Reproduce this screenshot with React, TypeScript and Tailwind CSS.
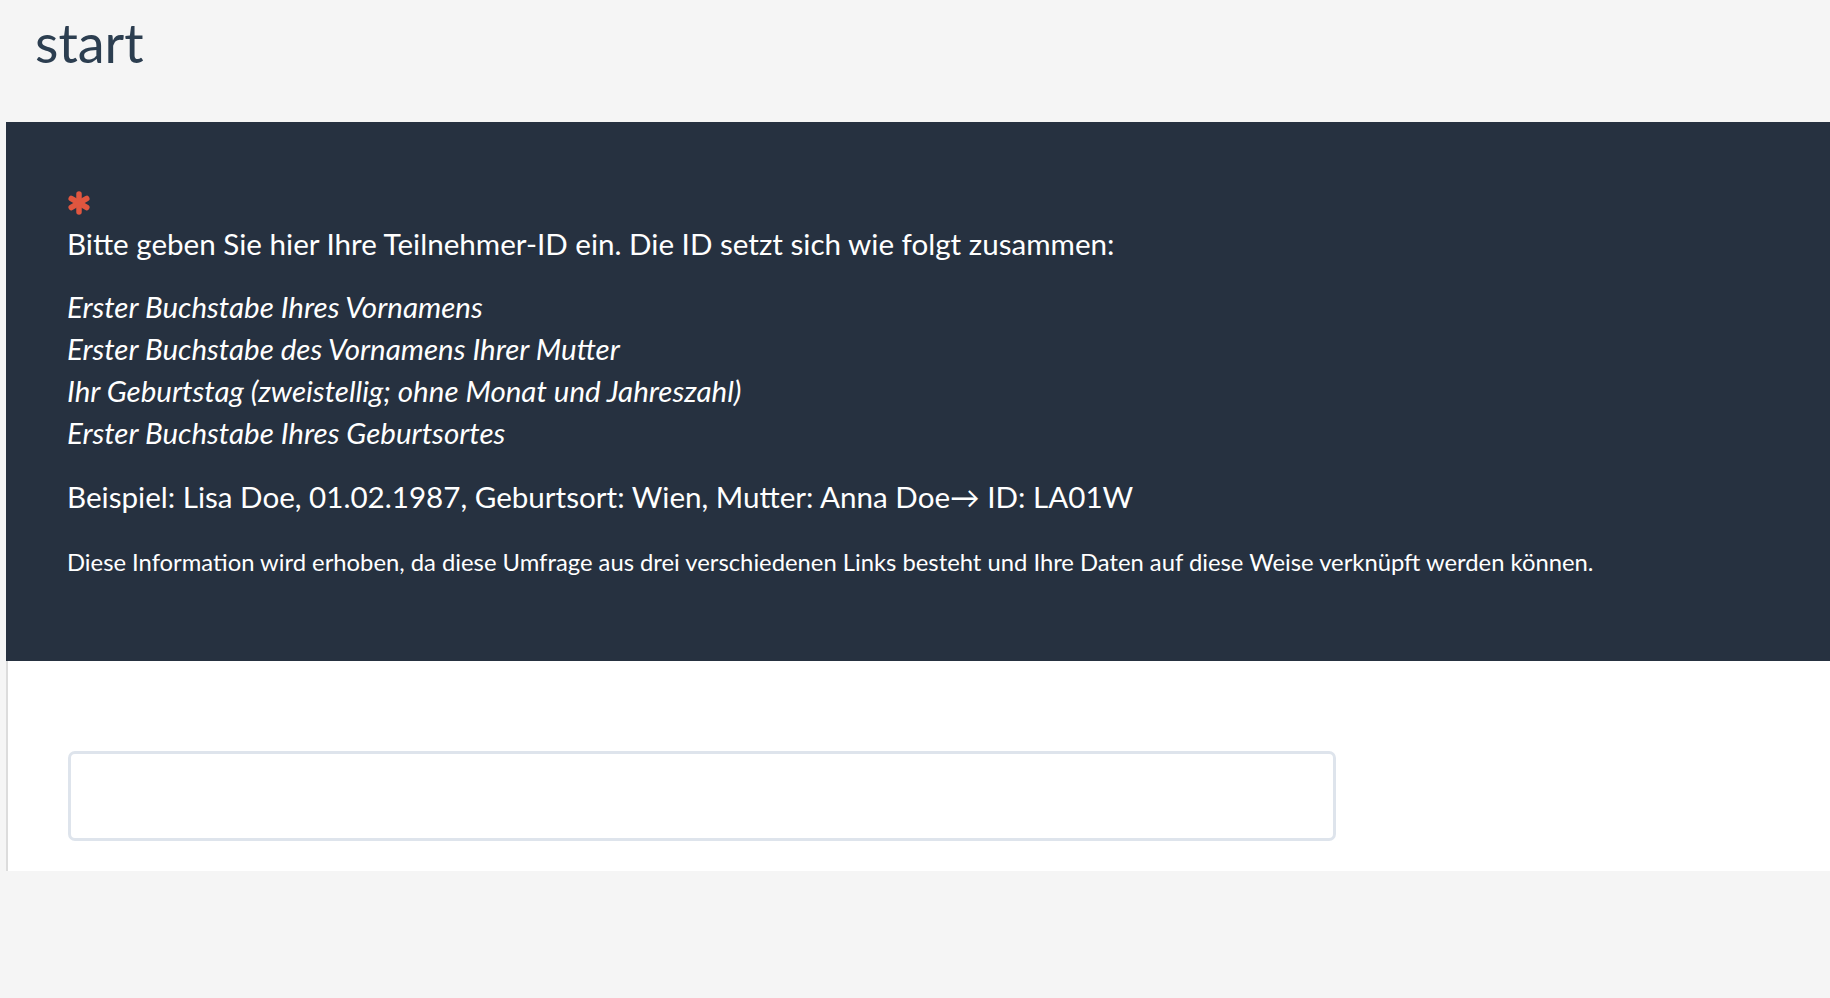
import { useState } from 'react';

function Asterisk() {
  return (
    <svg width="24" height="24" viewBox="0 0 24 24" className="block">
      <g stroke="#e0563f" strokeWidth="5.5" strokeLinecap="round">
        <line x1="12" y1="3" x2="12" y2="21" />
        <line x1="4.2" y1="7.5" x2="19.8" y2="16.5" />
        <line x1="4.2" y1="16.5" x2="19.8" y2="7.5" />
      </g>
    </svg>
  );
}

export default function App() {
  const [value, setValue] = useState('');

  return (
    <div className="min-h-screen bg-[#f5f5f5] font-['Lato',sans-serif]">
      <header className="h-[122px] pl-[35px] pt-[13px]">
        <h1 className="text-[54px] leading-[60px] text-[#2c3e50]">start</h1>
      </header>

      <section className="ml-[6px]">
        <div className="bg-[#263140] pl-[61px] pr-[40px] pt-[69px] pb-[84px] text-white">
          <Asterisk />
          <p className="mt-[11px] text-[29.6px] leading-[36px]">
            Bitte geben Sie hier Ihre Teilnehmer-ID ein. Die ID setzt sich wie folgt zusammen:
          </p>
          <div className="mt-[24px] text-[29.5px] italic leading-[42px]">
            <div>Erster Buchstabe Ihres Vornamens</div>
            <div>Erster Buchstabe des Vornamens Ihrer Mutter</div>
            <div>Ihr Geburtstag (zweistellig; ohne Monat und Jahreszahl)</div>
            <div>Erster Buchstabe Ihres Geburtsortes</div>
          </div>
          <p className="mt-[25px] text-[29.6px] leading-[36px]">
            Beispiel: Lisa Doe, 01.02.1987, Geburtsort: Wien, Mutter: Anna Doe→ ID: LA01W
          </p>
          <p className="mt-[32px] text-[23.8px] leading-[30px]">
            Diese Information wird erhoben, da diese Umfrage aus drei verschiedenen Links besteht und Ihre Daten auf diese Weise verknüpft werden können.
          </p>
        </div>

        <div className="border-l-2 border-[#dcdcdc] bg-white pl-[60px] pt-[90px] pb-[30px]">
          <input
            type="text"
            value={value}
            onChange={(e) => setValue(e.target.value)}
            className="block h-[90px] w-[1268px] rounded-[7px] border-[3px] border-[#dee4ec] bg-white px-4 text-[22px] text-[#2c3e50] outline-none"
          />
        </div>
      </section>
    </div>
  );
}
